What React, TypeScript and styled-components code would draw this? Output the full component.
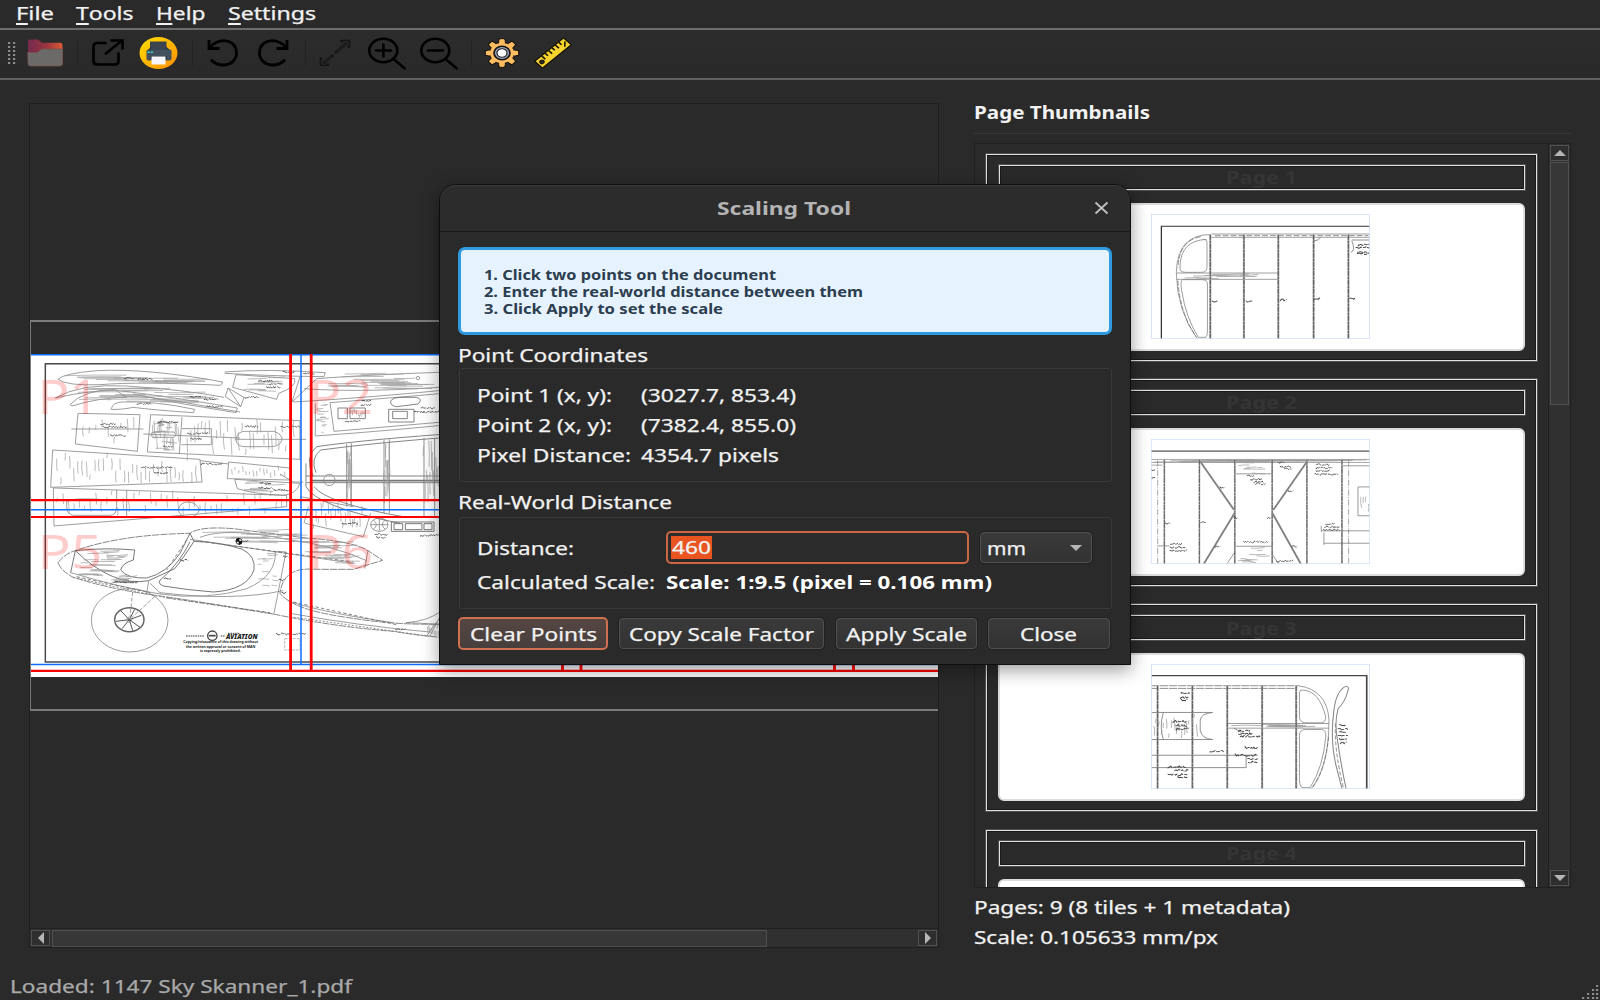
import React, { useLayoutEffect, useRef, useState } from "react";
import styled, { createGlobalStyle, css } from "styled-components";

const Global = createGlobalStyle`
  * { box-sizing: border-box; }
  html, body { margin: 0; background: #2a2a2a; overflow: hidden; }
  body { font-family: "Noto Sans", "Open Sans", sans-serif; font-size: 18px; color: #f2f2f2; }
`;

/* ---------- text ---------- */

const TextSlot = styled.span<{ $w: number; $size: number; $bold?: boolean; $color?: string; $line?: number }>`
  display: block;
  flex: none;
  width: ${(p) => p.$w}px;
  height: ${(p) => p.$line ?? 24}px;
  line-height: ${(p) => p.$line ?? 24}px;
  font-size: ${(p) => p.$size}px;
  font-weight: ${(p) => (p.$bold ? 700 : 400)};
  color: ${(p) => p.$color ?? "#f2f2f2"};
  -webkit-text-stroke: ${(p) => (p.$bold ? 0 : 0.25)}px currentColor;
  white-space: nowrap;
`;

const TextInner = styled.span`
  display: inline-block;
  transform-origin: 0 50%;
  vertical-align: top;
`;

type FitProps = { w: number; size?: number; bold?: boolean; color?: string; line?: number; children: React.ReactNode };

function Fit({ w, size = 18, bold, color, line, children }: FitProps) {
  const ref = useRef<HTMLSpanElement>(null);
  const [scale, setScale] = useState(1);
  useLayoutEffect(() => {
    if (ref.current && ref.current.offsetWidth) setScale(w / ref.current.getBoundingClientRect().width);
  }, [w]);
  return (
    <TextSlot $w={w} $size={size} $bold={bold} $color={color} $line={line}>
      <TextInner ref={ref} style={{ transform: `scaleX(${scale})` }}>{children}</TextInner>
    </TextSlot>
  );
}

/* ---------- window ---------- */

const Window = styled.div`
  position: relative;
  width: 1600px;
  height: 1000px;
  overflow: hidden;
  display: flex;
  flex-direction: column;
  background: #2a2a2a;
`;

const MenuBar = styled.nav`
  height: 30px;
  flex: none;
  display: flex;
  gap: 22.5px;
  padding: 0 0 0 15.5px;
  border-bottom: 2px solid #6c6c6c;
`;

const Mnemonic = styled.span`
  border-bottom: 2px solid #f2f2f2;
  display: inline-block;
  line-height: 19px;
`;

const ToolBar = styled.div`
  height: 50px;
  flex: none;
  display: flex;
  align-items: center;
  padding: 0 0 2px 7px;
  border-bottom: 2px solid #606060;
  background: linear-gradient(#2c2c2c, #292929);
`;

const ToolButton = styled.div<{ $l: number }>`
  width: 40px;
  height: 34px;
  margin-left: ${(p) => p.$l}px;
  flex: none;
  svg { display: block; }
`;

const Separator = styled.div<{ $l: number }>`
  width: 1px;
  height: 26px;
  margin-left: ${(p) => p.$l}px;
  background: #222;
  flex: none;
`;

const Main = styled.div`
  flex: 1;
  min-height: 0;
  display: flex;
  padding: 23px 29px 0 29px;
`;

const Viewer = styled.section`
  width: 910px;
  height: 845px;
  border: 1px solid #1f1f1f;
  display: flex;
  flex-direction: column;
  flex: none;
`;

const Scene = styled.div`
  height: 391px;
  margin-top: 216px;
  border: solid #7b7b7b;
  border-width: 2px 0 2px 1px;
  padding-top: 32px;
  svg { display: block; }
`;

const HScroll = styled.div`
  margin-top: auto;
  height: 19px;
  display: flex;
  align-items: center;
  gap: 2px;
  padding: 0 1px;
  border-top: 1px solid #202020;
  background: #303030;
`;

const VScroll = styled.div`
  width: 22px;
  display: flex;
  flex-direction: column;
  align-items: center;
  gap: 1px;
  padding: 1px 0 1px;
  border-left: 1px solid #202020;
  background: #303030;
`;

const ArrowButton = styled.div<{ $w: number; $h: number }>`
  width: ${(p) => p.$w}px;
  height: ${(p) => p.$h}px;
  flex: none;
  border: 1px solid #505050;
  background: #2e2e2e;
  display: flex;
  align-items: center;
  justify-content: center;
`;

const Handle = styled.div<{ $w: number; $h: number }>`
  width: ${(p) => p.$w}px;
  height: ${(p) => p.$h}px;
  border: 1px solid #505050;
  background: #373737;
`;

const Spacer = styled.div`flex: 1;`;

/* ---------- thumbnails ---------- */

const Side = styled.aside`
  width: 599px;
  margin-left: 34.5px;
  display: flex;
  flex-direction: column;
`;

const SideTitle = styled.div`
  height: 31px;
  border-bottom: 1px solid #363636;
`;

const ScrollArea = styled.div`
  height: 745px;
  margin-top: 9px;
  border: 1px solid #202020;
  display: flex;
  justify-content: space-between;
  overflow: hidden;
`;

const Cards = styled.div`
  display: flex;
  flex-direction: column;
  gap: 18.4px;
  padding: 9.5px 0 0 11px;
`;

const outline = css`
  border: 1px solid #e2e2e2;
  box-shadow: 0 0 0 1px rgba(210, 210, 210, 0.22), inset 0 0 0 1px rgba(0, 0, 0, 0.4);
`;

const Card = styled.div`
  ${outline}
  width: 551px;
  height: 207px;
  flex: none;
  padding: 10px 11px 0 12px;
  display: flex;
  flex-direction: column;
`;

const CardLabel = styled.div`
  ${outline}
  height: 25px;
  flex: none;
  display: flex;
  align-items: center;
  justify-content: center;
`;

const Preview = styled.div`
  height: 148px;
  margin: 13px 0 0 -1px;
  flex: none;
  border: 2px solid #dcdcdc;
  border-radius: 6px;
  background: #fff;
  display: flex;
  align-items: center;
  justify-content: center;
  svg { display: block; margin: 0 1px 1px 0; }
`;

const Info = styled.div`
  padding-top: 6.5px;
  display: flex;
  flex-direction: column;
  gap: 6px;
`;

const StatusBar = styled.footer`
  height: 30px;
  flex: none;
  padding: 4px 0 0 10px;
  display: flex;
  justify-content: space-between;
  align-items: flex-start;
  svg { margin-top: 11px; }
`;

/* ---------- dialog ---------- */

const Dialog = styled.div`
  position: absolute;
  left: 439px;
  top: 184px;
  width: 692px;
  height: 481px;
  border: 1px solid #0e0e0e;
  border-radius: 17px 17px 0 0;
  background: #2a2a2a;
  box-shadow: 0 5px 18px rgba(0, 0, 0, 0.4), inset 0 1px 0 #3b3b3b;
  display: flex;
  flex-direction: column;
`;

const DialogHeader = styled.header`
  height: 47px;
  flex: none;
  border-bottom: 1px solid #1b1b1b;
  background: #2c2c2c;
  border-radius: 16px 16px 0 0;
  box-shadow: inset 0 1px 0 #3b3b3b;
  display: flex;
  align-items: center;
  padding: 0 21px 0 277px;
  justify-content: space-between;
`;

const DialogBody = styled.div`
  padding: 15px 18px 0;
  display: flex;
  flex-direction: column;
`;

const Hint = styled.div`
  height: 88px;
  border: 3px solid #2f9ae0;
  border-radius: 7px;
  background: #e6f3fe;
  padding: 16px 0 0 23px;
  display: flex;
  flex-direction: column;
`;

const GroupTitle = styled.div`
  margin-top: 8px;
  height: 24px;
`;

const Group = styled.div<{ $h: number; $top: number; $pad: number }>`
  height: ${(p) => p.$h}px;
  margin-top: ${(p) => p.$top}px;
  margin-left: 1px;
  border: 1px solid #393939;
  border-radius: 3px;
  padding: ${(p) => p.$pad}px 18px 0 16.5px;
`;

const Row = styled.div<{ $h: number }>`
  height: ${(p) => p.$h}px;
  display: flex;
  align-items: center;
`;

const Cell = styled.div<{ $w: number }>`
  width: ${(p) => p.$w}px;
  flex: none;
`;

const Field = styled.div`
  width: 303px;
  height: 33px;
  border: 2px solid #cb6745;
  border-radius: 5px;
  background: #2c2c2c;
  padding: 3px;
`;

const Selection = styled.div`
  width: 41px;
  height: 23px;
  background: #e95420;
  padding-left: 1px;
`;

const raised = css`
  border: 1px solid #505050;
  border-radius: 4px;
  background: linear-gradient(#3a3a3a, #323232);
  box-shadow: 0 0 0 1px #202020;
`;

const Combo = styled.div`
  ${raised}
  width: 112px;
  height: 31px;
  margin-left: 11px;
  padding: 0 8px 0 6px;
  display: flex;
  align-items: center;
  justify-content: space-between;
`;

const Buttons = styled.div`
  display: flex;
  align-items: center;
  justify-content: space-between;
  margin-top: 8px;
  padding-right: 2px;
`;

const Button = styled.div<{ $w: number; $focus?: boolean }>`
  ${raised}
  width: ${(p) => p.$w}px;
  height: 31px;
  display: flex;
  align-items: center;
  justify-content: center;
  ${(p) => p.$focus && css`
    height: 33px;
    border: 2px solid #cf7150;
    border-radius: 5px;
    background: linear-gradient(#554642, #473f3d);
    box-shadow: none;
  `}
`;

/* ---------- drawing helpers ---------- */

const rnd = (n: number) => {
  const v = Math.sin(n * 127.1 + 11.7) * 43758.5453;
  return v - Math.floor(v);
};

/* Short hand-drawn wood grain strokes inside a box. */
function Grain({ x, y, w, h, n, across }: { x: number; y: number; w: number; h: number; n: number; across?: boolean }) {
  let d = "";
  for (let i = 0; i < n; i++) {
    const a = rnd(i + x), b = rnd(i * 3 + y), c = 0.15 + rnd(i * 7 + x + y) * 0.35;
    if (across) {
      const l = w * c;
      d += `M${x + a * (w - l)} ${y + b * h}q${l / 2} ${(a - 0.5) * 6} ${l} ${(b - 0.5) * 5}`;
    } else {
      const l = h * c;
      d += `M${x + ((i + 0.5) / n) * w} ${y + b * (h - l)}q${(a - 0.5) * 8} ${l / 2} ${(c - 0.3) * 14} ${l}`;
    }
  }
  return <path d={d} stroke="#999" strokeWidth="2" />;
}

/* Illegible handwritten note. */
function Note({ x, y, w }: { x: number; y: number; w: number }) {
  let d = `M${x} ${y}`;
  for (let i = 0; i < w; i += 3) d += `L${x + i} ${y + (rnd(i + x + y) - 0.5) * 6}`;
  return <path d={d} stroke="#444" strokeWidth="2.6" strokeDasharray="17 3 9 2" />;
}

const notes = (list: number[][]) => list.map(([x, y, w], i) => <Note key={i} x={x} y={y} w={w} />);

function Plan() {
  return (
    <svg width="907" height="323" viewBox="31 354 907 323">
      <defs>
        <clipPath id="plan"><rect x="31" y="354" width="907" height="323" /></clipPath>
      </defs>
      <rect x="31" y="354" width="907" height="323" fill="#fff" />
      <g clipPath="url(#plan)" fill="none" stroke="#858585" strokeWidth="2.4">
        <g transform="translate(0 310) scale(.33333)">
          <path d="M1400 161H136V1056H1400" stroke="#484848" strokeWidth="4.4" />
          <path d="M174 208Q190 190 290 182Q440 174 668 216L662 226Q420 214 300 224Q200 228 174 208" />
          <path d="M166 264Q240 220 380 228Q560 240 672 262M166 264Q280 238 360 242Q520 262 712 294L708 308Q560 286 400 252M210 284Q250 240 345 238Q360 250 380 262Q300 262 216 288ZM300 258Q450 254 590 284L720 306" />
          <path d="M334 296Q338 276 370 276Q460 272 584 298L580 308Q460 300 400 292Q360 300 334 298Z" />
          <path d="M674 186Q800 176 976 188L972 200Q800 198 674 190M708 194L884 206Q892 230 836 250L830 268L698 232ZM684 234L732 262L722 290L676 260ZM684 234L722 290" />
          <Grain x={190} y={192} w={440} h={24} n={14} across />
          <Grain x={220} y={236} w={430} h={45} n={22} across />
          <Grain x={710} y={200} w={150} h={50} n={9} across />
          <path d="M234 310L420 314L412 424L226 402ZM214 357H430" />
          <Grain x={240} y={316} w={170} h={90} n={9} />
          <path d="M452 314L900 332V448L442 426ZM546 322L538 430M546 356H634V404H544M430 372L720 384" />
          <path d="M458 366H522Q532 374 522 382H458Q448 374 458 366M732 364H822Q848 374 846 390Q840 410 812 410H732Q708 408 708 388Q712 366 732 364M708 388H918" />
          <Grain x={456} y={322} w={84} h={100} n={20} />
          <Grain x={456} y={330} w={80} h={90} n={15} across />
          <Grain x={556} y={324} w={330} h={112} n={30} />
          <path d="M158 420L600 448L606 516L152 532ZM160 534L860 556V590L162 648Z" />
          <Grain x={164} y={426} w={430} h={98} n={34} />
          <Grain x={164} y={540} w={690} h={78} n={42} />
          <path d="M350 540V590Q350 616 330 616H220Q200 612 200 590V575Q220 560 350 572M380 540V620M535 600Q540 576 564 576Q590 576 598 600Q590 622 564 622Q540 620 535 600" />
          <path d="M686 456L870 474V510L682 506ZM704 508L900 520Q890 552 850 556Q760 552 712 536ZM600 452L686 462M840 492L880 516H910" />
          <Grain x={690} y={464} w={170} h={40} n={16} />
          <Grain x={720} y={514} w={150} h={34} n={8} across />
          <path d="M876 276L950 206Q1100 194 1400 184M880 276Q1100 264 1400 234M912 236Q1100 250 1400 226M946 280V378Q1200 360 1400 338M990 278Q1200 262 1400 244M990 278L1002 364L1400 330M876 276L900 200" />
          <Grain x={950} y={192} w={380} h={42} n={20} across />
          <Grain x={946} y={284} w={44} h={84} n={18} across />
          <path d="M1014 294h28v32h-28zM1050 294h46v32h-46zM1172 272Q1180 262 1200 262H1250Q1270 268 1254 282L1190 290Q1170 288 1172 272M1166 298h76v38h-76zM1178 304h44v22h-44z" stroke="#666" />
          <Grain x={1050} y={296} w={46} h={28} n={12} />
          <path d="M940 500Q912 440 950 410Q1100 388 1400 368M948 488Q930 446 962 420Q1140 396 1400 378M918 498H1400M920 518H1400M918 460V530Q950 590 1200 640M942 530Q980 580 1220 622" stroke="#666" />
          <path d="M930 512H1400" stroke="#777" strokeWidth="5" />
          <path d="M1040 402V590M1054 400V590M1152 390V610M1168 388V610M1272 384V620M1304 384V620" stroke="#777" />
          <Grain x={1040} y={402} w={14} h={180} n={12} />
          <Grain x={1152} y={392} w={16} h={200} n={12} />
          <Grain x={1270} y={386} w={50} h={200} n={14} />
          <circle cx="988" cy="510" r="17" /><circle cx="1254" cy="204" r="5" />
          <path d="M900 560L1060 590M915 640L1090 680L1112 610M925 590L912 640" />
          <Grain x={930} y={570} w={160} h={90} n={22} />
          {notes([[374, 204, 30], [414, 208, 48], [776, 212, 45], [806, 222, 44], [800, 232, 44], [410, 282, 46], [570, 260, 36], [612, 268, 44], [620, 290, 50], [734, 262, 44], [850, 186, 36], [910, 190, 34], [302, 342, 48], [310, 351, 74], [332, 376, 46], [474, 336, 66], [562, 370, 64], [572, 386, 36], [490, 410, 30], [736, 350, 42], [842, 350, 58], [424, 472, 94], [462, 489, 44], [604, 462, 66], [780, 520, 36], [776, 534, 44], [820, 540, 50], [1084, 284, 32], [1036, 334, 48], [1242, 306, 76], [1262, 294, 44], [1086, 272, 30]])}
        </g>
        <g transform="translate(0 500) scale(.33333)">
          <path d="M174 188Q196 160 226 152Q360 104 570 100Q600 78 700 86Q840 104 920 114Q1060 124 1104 152L1148 181L1060 208H940Q850 200 840 280Q880 330 1040 352Q1180 376 1320 372M174 188Q184 214 220 232Q340 270 480 288Q620 308 820 342Q1000 380 1180 394Q1260 408 1330 412" stroke="#6a6a6a" strokeDasharray="22 3" />
          <path d="M226 152Q220 180 212 218M226 152Q320 142 404 150L400 180Q366 190 362 210Q380 236 440 234Q500 220 540 160L570 100L582 124Q546 180 524 206L446 242Q340 262 226 152M582 124Q660 126 728 148Q768 170 762 210Q740 270 640 276Q560 270 490 258Q466 248 488 234Q540 186 570 126" stroke="#555" />
          <path d="M570 118L1060 190M600 112Q680 80 860 118Q1000 136 1100 182M212 218Q360 262 480 282Q620 302 740 266Q830 228 826 154M480 278Q700 304 850 272M830 154L858 156L832 290L822 340M450 250L482 280M446 242L440 282M866 304Q980 340 1180 368M870 340Q1080 378 1290 396M1104 150L1094 206" />
          <path d="M600 124L1060 186M560 120L500 210M230 230L450 278M500 294L810 338M880 306L1190 374" stroke="#666" strokeDasharray="10 7" />
          <Grain x={235} y={150} w={150} h={75} n={24} across />
          <Grain x={600} y={90} w={350} h={36} n={15} across />
          <Grain x={770} y={150} w={70} h={110} n={12} across />
          <Grain x={880} y={118} w={210} h={78} n={18} across />
          <Grain x={320} y={228} w={100} h={26} n={14} across />
          <path d="M220 232L480 290L820 342M870 350L1300 410" stroke="#777" strokeDasharray="6 5" />
          <ellipse cx="389" cy="361" rx="115" ry="95" />
          <ellipse cx="388" cy="359" rx="44" ry="36" stroke="#666" strokeWidth="4.5" />
          <path d="M388 359L404 328M388 359L424 346M388 359L420 382M388 359L398 392M388 359L366 386M388 359L348 364M388 359L362 332" stroke="#555" strokeWidth="3" />
          <path d="M398 276L390 350M464 290L396 352" strokeDasharray="12 5" />
          <circle cx="388" cy="359" r="8" />
          <path d="M1320 336Q1280 364 1218 368Q1290 370 1330 376M1280 408L1310 366M1290 408L1320 350" />
          <Grain x={1280} y={365} w={50} h={44} n={12} />
          <ellipse cx="1138" cy="74" rx="26" ry="20" /><path d="M1112 74H1164M1138 54V94M1120 60Q1138 74 1120 88M1156 60Q1138 74 1156 88" />
          <path d="M1174 66h128v28h-128zM1182 71h26v18h-26zM1216 71h50v18h-50zM1272 71h24v18h-24z" stroke="#777" strokeWidth="3" />
          <path d="M854 416h46v34h-46z" stroke="#aaa" strokeDasharray="9 3" />
          <circle cx="717" cy="124" r="9" fill="#fff" stroke="#111" /><path d="M717 124V115A9 9 0 0 0 708 124ZM717 124V133A9 9 0 0 0 726 124Z" fill="#111" stroke="#111" />
          <circle cx="637" cy="407" r="14" stroke="#444" strokeWidth="4" />
          <path d="M627 407H647" stroke="#444" strokeWidth="5" />
          <g fill="#1c1c1c" stroke="none" fontFamily="'Noto Sans', sans-serif" fontWeight="700">
            <text x="678" y="417" fontSize="19" fontStyle="italic" fontWeight="900" textLength="95" lengthAdjust="spacingAndGlyphs">AVIATION</text>
            <text x="550" y="430" fontSize="11.5" textLength="224" lengthAdjust="spacingAndGlyphs">Copying/reissuance of this drawing without</text>
            <text x="558" y="443" fontSize="11.5" textLength="208" lengthAdjust="spacingAndGlyphs">the written approval or consent of MAN</text>
            <text x="600" y="455" fontSize="11.5" textLength="122" lengthAdjust="spacingAndGlyphs">is expressly prohibited.</text>
          </g>
          <path d="M558 408H614M662 408H676M684 400H720" stroke="#444" strokeWidth="3" strokeDasharray="5 2" />
          {notes([[730, 124, 16], [540, 181, 26], [492, 236, 24], [830, 402, 90], [1026, 70, 50], [1124, 103, 40], [1130, 112, 28], [1262, 106, 56], [342, 246, 70], [1186, 388, 32], [850, 170, 18], [838, 240, 18], [846, 278, 18]])}
        </g>
      </g>
      <g fill="rgba(255,0,0,.2)" fontFamily="'Noto Sans', sans-serif" fontSize="47">
        <text x="37.5" y="414" textLength="62" lengthAdjust="spacingAndGlyphs">P1</text>
        <text x="308" y="414" textLength="65" lengthAdjust="spacingAndGlyphs">P2</text>
        <text x="37.5" y="569" textLength="65" lengthAdjust="spacingAndGlyphs">P5</text>
        <text x="308" y="569" textLength="65" lengthAdjust="spacingAndGlyphs">P6</text>
      </g>
      <g fill="none">
        <path d="M31 509.8H938M31 664.6H938M301 354V664M31 354.8H938" stroke="#0a6cff" strokeWidth="1.5" />
        <path d="M31 500.2H938M31 517H938M31 670.8H938" stroke="#f00" strokeWidth="2.2" />
        <path d="M290.6 354V670M311.2 354V670M562.5 354V670M581 354V670M834.5 354V670M853.5 354V670" stroke="#f00" strokeWidth="2.8" />
      </g>
    </svg>
  );
}

const Sheet = ({ box, children }: { box: string; children: React.ReactNode }) => (
  <svg width="219" height="125" viewBox={box} preserveAspectRatio="none" fill="none" stroke="#777" strokeWidth="2.2">
    {children}
  </svg>
);

const Post = ({ x, y, to }: { x: number; y: number; to: number }) => (
  <g>
    <path d={`M${x} ${y}V${to}`} stroke="#aaa" strokeWidth="5" />
    <path d={`M${x} ${y}V${to}`} stroke="#606060" strokeWidth="3" strokeDasharray="15 3 7 2" />
  </g>
);

const Thumb1 = () => (
  <Sheet box="486 370 528 375">
    <path d="M511 745V407H1014" stroke="#333" strokeWidth="3" />
    <path d="M630 432Q550 430 547 545Q548 660 598 745M620 446Q556 450 556 530Q554 545 570 545H608Q621 545 621 530V455Q622 446 610 446M562 567Q556 570 560 600Q570 680 600 740H618Q622 735 622 725V580Q622 568 610 567ZM632 430H1014M632 440H1014M547 547H793M547 566H793M793 547V566" stroke="#8a8a8a" />
    <path d="M606 438Q554 450 551 530M551 570Q556 670 595 738M640 435H1010" strokeDasharray="14 5" />
    <Grain x={560} y={551} w={230} h={12} n={7} across />
    {[629, 710, 793, 878, 962].map((x) => <Post key={x} x={x} y={432} to={745} />)}
    <path d="M878 450Q892 450 894 440M970 450Q980 480 968 485M970 448H1014" />
    {notes([[634, 632, 14], [716, 632, 16], [798, 628, 16], [880, 625, 16], [966, 624, 14], [986, 462, 28], [980, 471, 34], [984, 485, 30], [984, 490, 28]])}
    <rect x="487" y="371.5" width="526" height="372" stroke="#cfe0f8" />
  </Sheet>
);

const Thumb2 = () => (
  <Sheet box="95 236 656 373">
    <path d="M95 272H751" stroke="#555" strokeWidth="4" />
    <path d="M95 297H751M95 306H751M95 314H130" stroke="#888" />
    <Grain x={95} y={298} w={650} h={7} n={14} across />
    {[135, 240, 346, 458, 562, 667].map((x) => <Post key={x} x={x} y={298} to={609} />)}
    <path d="M243 304L344 448M346 456L253 609M562 304L461 448M458 456L544 609" stroke="#999" strokeWidth="6" />
    <path d="M243 304L344 448M346 456L253 609M562 304L461 448M458 456L544 609" stroke="#666" strokeWidth="2" />
    <path d="M348 340H458M348 556H458M322 609L345 575M458 580L478 609" />
    <Grain x={352} y={310} w={100} h={28} n={7} across />
    <Grain x={352} y={560} w={100} h={46} n={9} across />
    <path d="M115 300V609M687 300V609" strokeDasharray="18 4 3 4" stroke="#888" />
    <path d="M751 379H715V465H751M605 510H751M613 547H751M605 495V512M613 515V552M115 555H150M670 316H751" stroke="#777" />
    <Grain x={720} y={385} w={30} h={76} n={4} />
    {notes([[382, 346, 24], [394, 356, 34], [404, 364, 28], [408, 370, 32], [476, 306, 20], [482, 319, 34], [494, 325, 24], [590, 312, 40], [590, 322, 50], [590, 330, 45], [586, 341, 70], [302, 381, 16], [506, 392, 16], [138, 488, 18], [244, 485, 18], [344, 471, 12], [444, 472, 12], [618, 490, 28], [616, 499, 46], [612, 507, 50], [372, 543, 76], [154, 549, 36], [152, 560, 50], [152, 570, 54], [288, 557, 18], [518, 557, 18], [470, 600, 52], [95, 330, 14], [95, 352, 14]])}
    <rect x="96" y="237" width="654" height="371" stroke="#cfe0f8" />
  </Sheet>
);

const Thumb3 = () => (
  <Sheet box="470 72 534 374">
    <path d="M470 107H996V446" stroke="#444" strokeWidth="4" />
    <path d="M470 137H830M470 145H825" stroke="#777" strokeDasharray="20 2" />
    <path d="M830 137Q900 150 904 240Q904 380 860 446M838 150Q880 150 896 230Q896 248 884 248H845Q832 245 832 230V158Q832 150 838 150M845 268H886Q898 270 896 290Q890 380 858 442H838Q832 436 832 420V285Q832 270 845 268M658 250H904M658 264H904" stroke="#888" />
    <path d="M946 138Q954 140 950 152Q944 184 926 206Q916 250 926 310Q934 380 946 446M946 138Q922 150 916 210Q906 300 922 380L936 446" stroke="#888" strokeWidth="2.6" />
    <path d="M920 250Q916 330 940 446M903 290Q895 390 865 440" strokeDasharray="12 6" />
    <Grain x={664} y={252} w={220} h={10} n={7} across />
    {[486, 571, 656, 741, 824].map((x) => <Post key={x} x={x} y={138} to={446} />)}
    <path d="M470 217H620Q592 220 590 240V270Q594 296 620 298H470M500 217Q490 260 500 298M470 345H730M470 382H702V345M672 264L690 276" stroke="#777" />
    <Grain x={474} y={220} w={110} h={74} n={18} />
    {notes([[544, 160, 22], [542, 172, 24], [544, 180, 16], [524, 244, 36], [530, 256, 28], [532, 266, 32], [684, 272, 28], [684, 281, 34], [688, 288, 50], [614, 333, 34], [700, 323, 32], [676, 345, 54], [706, 356, 26], [708, 365, 24], [512, 380, 48], [528, 390, 34], [512, 403, 50], [536, 412, 26], [930, 254, 18], [926, 266, 26], [930, 276, 20], [926, 286, 26], [930, 298, 20], [932, 308, 16]])}
    <rect x="471" y="73" width="532" height="372" stroke="#cfe0f8" />
  </Sheet>
);

/* ---------- toolbar icons ---------- */

const Icon = ({ children }: { children: React.ReactNode }) => (
  <svg width="40" height="34" viewBox="0 0 40 34" fill="none" strokeLinecap="round" strokeLinejoin="round">{children}</svg>
);

const FolderIcon = () => (
  <Icon>
    <defs><linearGradient id="fold"><stop offset="0" stopColor="#752a50" /><stop offset=".5" stopColor="#96343f" /><stop offset="1" stopColor="#dd5a37" /></linearGradient></defs>
    <path d="M3 5.5Q3 3.5 5 3.5H13L17 6.8H35Q37.5 6.8 37.5 9V27H3Z" fill="url(#fold)" />
    <path d="M3 16.5H12L17 13H37.5V27.5Q37.5 30 35 30H5.5Q3 30 3 27.5Z" fill="#6b6a69" stroke="#75504c" strokeWidth=".8" />
  </Icon>
);

const ExportIcon = () => (
  <Icon>
    <path d="M17.5 7H9.5Q5.5 7 5.5 10.5V25Q5.5 28.5 9.5 28.5H27Q30.5 28.5 30.5 25V17.5" stroke="#000" strokeWidth="2.7" />
    <path d="M17 18.2L34 4.5M22.5 4.5H34.5V13.5" stroke="#000" strokeWidth="2.7" strokeLinecap="butt" strokeLinejoin="miter" />
  </Icon>
);

const PrinterIcon = () => (
  <Icon>
    <defs><linearGradient id="sun" x2="1" y2="1"><stop offset="0" stopColor="#ffe000" /><stop offset="1" stopColor="#ff8d00" /></linearGradient></defs>
    <ellipse cx="19.5" cy="17" rx="19" ry="16" fill="url(#sun)" />
    <path d="M11 5.5H27.5V15H11Z" fill="#3a4551" />
    <path d="M9 14L12 10.5V13H27V10.5L31 14Z" fill="#2c3641" />
    <rect x="7.5" y="13.5" width="25" height="11" rx="1.8" fill="#43515e" />
    <path d="M11.5 20H28V23H11.5Z" fill="#2c3641" />
    <path d="M12.5 20.5H26.5V28.5H12.5Z" fill="#f7f6fa" />
    <path d="M9 16.3H10.3M12.2 16.3H13.5" stroke="#40d0d0" strokeWidth="1.4" />
  </Icon>
);

const TurnIcon = ({ flip }: { flip?: boolean }) => (
  <Icon>
    <g transform={flip ? "translate(40 0) scale(-1 1)" : undefined} stroke="#000" strokeWidth="2.8" strokeLinecap="butt">
      <path d="M6 4V12.5H16.5" strokeLinejoin="miter" />
      <path d="M6.5 12Q12.5 4.6 21 4.6C29.5 5 33.5 10.5 33.5 17C33.5 24 27.5 29 20.5 29Q12.5 29 8 23.5" />
    </g>
  </Icon>
);

const FitIcon = () => (
  <Icon>
    <path d="M6.5 28.5L17.5 19.8M21 16.5L33.5 5.5M26.5 5H34V11M6 22.5V28.8H13" stroke="#131313" strokeWidth="2.6" />
    <path d="M7.5 27.5L16.5 20.3M22 15.8L32.5 6.5M28.5 5.4H33.4V9.5M6.6 24V28.2H11.5" stroke="#2e2e2e" strokeWidth=".9" />
  </Icon>
);

const LensIcon = ({ plus }: { plus?: boolean }) => (
  <Icon>
    <ellipse cx="16.3" cy="14.5" rx="14" ry="11.8" stroke="#000" strokeWidth="2.6" />
    <path d={`M26.5 23L37.5 32.3M9 14.5H24${plus ? "M16.4 8.5V20.5" : ""}`} stroke="#000" strokeWidth="2.6" />
  </Icon>
);

const TEETH = [0, 45, 90, 135, 180, 225, 270, 315];

const GearIcon = () => (
  <Icon>
    <g transform="translate(20 17) scale(1.17 1)">
      {TEETH.map((a) => (
        <path key={a} transform={`rotate(${a})`} d="M-3.2 -9L-2.3 -14.3H2.3L3.2 -9Z" fill="#ffbd62" stroke="#14100a" strokeWidth="1" />
      ))}
      <circle r="10.6" fill="#ffbd62" stroke="#14100a" strokeWidth=".8" />
      {TEETH.map((a) => (
        <path key={a} transform={`rotate(${a})`} d="M-2.5 -9L-2 -13.2H2L2.5 -9Z" fill="#ffbd62" />
      ))}
      <circle r="6.8" fill="#a3a9b3" stroke="#14141c" strokeWidth="1.5" />
      <circle r="4.3" fill="#fff" stroke="#20242c" strokeWidth="1" />
    </g>
  </Icon>
);

const RulerIcon = () => (
  <Icon>
    <g transform="translate(20 17) scale(1.17 1) rotate(-43.5)">
      <rect x="-17" y="-4.8" width="34" height="9.6" fill="#f6d22f" stroke="#161300" strokeWidth="1.2" />
      <path d="M-9 -4.5V0M-5 -4.5V-1M-1 -4.5V0M3 -4.5V-1M7 -4.5V0M11 -4.5V-1" stroke="#161300" strokeWidth="1.5" strokeLinecap="butt" />
      <circle cx="-13" cy="0" r="1.8" fill="#2b2a22" stroke="#161300" />
      <path d="M12 2L15 -1" stroke="#161300" strokeWidth="1.4" />
    </g>
  </Icon>
);

const Arrow = ({ dir }: { dir: "up" | "down" | "left" | "right" }) => {
  const d = { up: "M1 9H13L7 3Z", down: "M1 3H13L7 9Z", left: "M10 0V12L4 6Z", right: "M4 0V12L10 6Z" }[dir];
  return <svg width="14" height="12" viewBox="0 0 14 12"><path d={d} fill="#b5b5b5" /></svg>;
};

const dots = (pts: number[][]) => pts.map(([x, y], i) => <rect key={i} x={x} y={y} width="2.2" height="2" fill="#8c8c8c" />);

const GRIP = [[14, 0], [10, 4], [14, 4], [5, 8], [10, 8], [14, 8], [0, 12], [5, 12], [10, 12], [14, 12]];
const HANDLE = [0, 4, 8, 12, 16, 20].flatMap((y) => [[1, y], [6, y]]);

/* ---------- app ---------- */

const MENU: [string, number][] = [["File", 38], ["Tools", 57.5], ["Help", 49.5], ["Settings", 88]];
const PAGES = [<Thumb1 />, <Thumb2 />, <Thumb3 />, null];
const BUTTONS: [string, number, number][] = [["Clear Points", 150, 127], ["Copy Scale Factor", 205, 185], ["Apply Scale", 141, 121], ["Close", 122, 57]];

export default function App() {
  return (
    <Window>
      <Global />
      <MenuBar>
        {MENU.map(([t, w]) => (
          <Fit key={t} w={w} line={27}><Mnemonic>{t[0]}</Mnemonic>{t.slice(1)}</Fit>
        ))}
      </MenuBar>
      <ToolBar>
        <svg width="9" height="22" viewBox="0 0 9 22">{dots(HANDLE)}</svg>
        <ToolButton $l={9}><FolderIcon /></ToolButton>
        <Separator $l={12} />
        <ToolButton $l={9.5}><ExportIcon /></ToolButton>
        <ToolButton $l={11.5}><PrinterIcon /></ToolButton>
        <Separator $l={12.5} />
        <ToolButton $l={10}><TurnIcon /></ToolButton>
        <ToolButton $l={10}><TurnIcon flip /></ToolButton>
        <Separator $l={12} />
        <ToolButton $l={9.5}><FitIcon /></ToolButton>
        <ToolButton $l={12}><LensIcon plus /></ToolButton>
        <ToolButton $l={12}><LensIcon /></ToolButton>
        <Separator $l={12} />
        <ToolButton $l={9.5}><GearIcon /></ToolButton>
        <ToolButton $l={11}><RulerIcon /></ToolButton>
      </ToolBar>
      <Main>
        <Viewer>
          <Scene><Plan /></Scene>
          <HScroll>
            <ArrowButton $w={19} $h={16}><Arrow dir="left" /></ArrowButton>
            <Handle $w={715} $h={17} />
            <Spacer />
            <ArrowButton $w={19} $h={16}><Arrow dir="right" /></ArrowButton>
          </HScroll>
        </Viewer>
        <Side>
          <SideTitle><Fit w={176} bold line={19}>Page Thumbnails</Fit></SideTitle>
          <ScrollArea>
            <Cards>
              {PAGES.map((p, i) => (
                <Card key={i}>
                  <CardLabel><Fit w={71} bold color="#353535">Page {i + 1}</Fit></CardLabel>
                  <Preview>{p}</Preview>
                </Card>
              ))}
            </Cards>
            <VScroll>
              <ArrowButton $w={19} $h={16}><Arrow dir="up" /></ArrowButton>
              <Handle $w={19} $h={243} />
              <Spacer />
              <ArrowButton $w={19} $h={16}><Arrow dir="down" /></ArrowButton>
            </VScroll>
          </ScrollArea>
          <Info>
            <Fit w={316}>Pages: 9 (8 tiles + 1 metadata)</Fit>
            <Fit w={244}>Scale: 0.105633 mm/px</Fit>
          </Info>
        </Side>
      </Main>
      <StatusBar>
        <Fit w={342} color="#a9a9a9">Loaded: 1147 Sky Skanner_1.pdf</Fit>
        <svg width="18" height="16" viewBox="0 0 18 16">{dots(GRIP)}</svg>
      </StatusBar>

      <Dialog>
        <DialogHeader>
          <Fit w={134} bold color="#b4b4b4">Scaling Tool</Fit>
          <svg width="15" height="14" viewBox="0 0 15 14"><path d="M1.5 1.5L13.5 12.5M13.5 1.5L1.5 12.5" stroke="#c4c4c4" strokeWidth="1.7" /></svg>
        </DialogHeader>
        <DialogBody>
          <Hint>
            <Fit w={292} size={15} line={17} bold color="#2c3e50">1. Click two points on the document</Fit>
            <Fit w={379} size={15} line={17} bold color="#2c3e50">2. Enter the real-world distance between them</Fit>
            <Fit w={239} size={15} line={17} bold color="#2c3e50">3. Click Apply to set the scale</Fit>
          </Hint>
          <GroupTitle><Fit w={190}>Point Coordinates</Fit></GroupTitle>
          <Group $h={114} $top={1} $pad={11}>
            <Row $h={30}><Cell $w={164}><Fit w={135}>Point 1 (x, y):</Fit></Cell><Fit w={155}>(3027.7, 853.4)</Fit></Row>
            <Row $h={30}><Cell $w={164}><Fit w={135}>Point 2 (x, y):</Fit></Cell><Fit w={155}>(7382.4, 855.0)</Fit></Row>
            <Row $h={30}><Cell $w={164}><Fit w={154}>Pixel Distance:</Fit></Cell><Fit w={138}>4354.7 pixels</Fit></Row>
          </Group>
          <GroupTitle><Fit w={214}>Real-World Distance</Fit></GroupTitle>
          <Group $h={92} $top={3} $pad={11}>
            <Row $h={37}>
              <Cell $w={189}><Fit w={97}>Distance:</Fit></Cell>
              <Field><Selection><Fit w={39} line={23}>460</Fit></Selection></Field>
              <Combo><Fit w={39}>mm</Fit><Arrow dir="down" /></Combo>
            </Row>
            <Row $h={32}>
              <Cell $w={189}><Fit w={178}>Calculated Scale:</Fit></Cell>
              <Fit w={326} bold color="#fff">Scale: 1:9.5 (pixel = 0.106 mm)</Fit>
            </Row>
          </Group>
          <Buttons>
            {BUTTONS.map(([t, w, tw], i) => (
              <Button key={t} $w={w} $focus={i === 0}><Fit w={tw}>{t}</Fit></Button>
            ))}
          </Buttons>
        </DialogBody>
      </Dialog>
    </Window>
  );
}
